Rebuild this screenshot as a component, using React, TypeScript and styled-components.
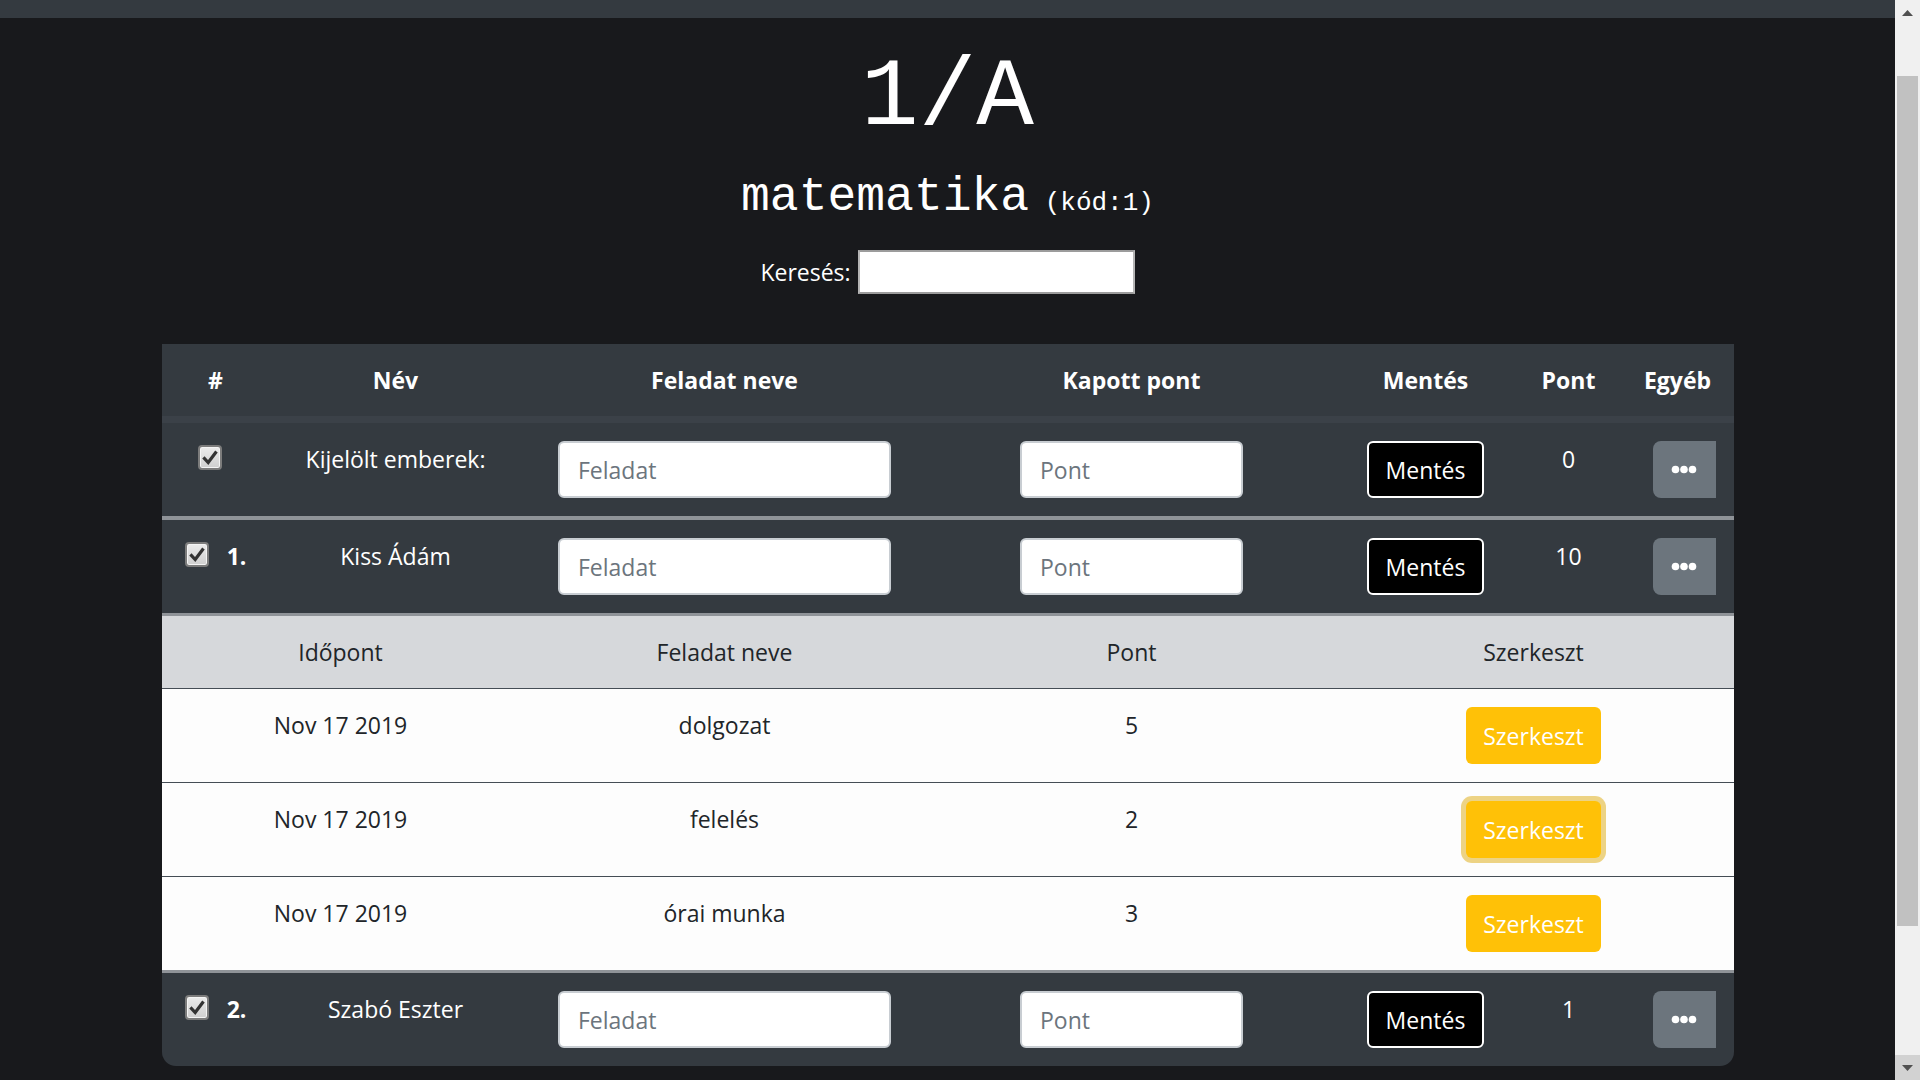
import React, { useLayoutEffect } from "react";
import styled, { createGlobalStyle } from "styled-components";

const SANS = `"Open Sans", "Noto Sans", "Liberation Sans", sans-serif`;
const MONO = `"Liberation Mono", "Courier New", monospace`;

const GlobalStyle = createGlobalStyle`
  html { scrollbar-width: none; }
  html, body { margin: 0; padding: 0; background: #18191c; }
  body { font-family: ${SANS}; font-size: 23px; color: #fff; }
  *, *::before, *::after { box-sizing: border-box; }
  ::-webkit-scrollbar { display: none; }
`;

const Page = styled.div`
  margin-right: 25px;
`;

const Navbar = styled.nav`
  height: 83px;
  background: #343a40;
`;

const Main = styled.main`
  display: flex;
  flex-direction: column;
  align-items: center;
  padding: 23px 0 178px;
`;

const Title = styled.h1`
  margin: 0;
  font-family: ${MONO};
  font-weight: 400;
  font-size: 96px;
  line-height: 115px;
  color: #fff;
`;

const Subtitle = styled.h2`
  margin: 12px 0 0;
  font-family: ${MONO};
  font-weight: 400;
  font-size: 48px;
  line-height: 58px;
  color: #fff;
`;

const Code = styled.small`
  font-size: 26px;
  line-height: 1;
`;

const Search = styled.label`
  margin-top: 24px;
  display: flex;
  align-items: center;
  gap: 7px;
  font-size: 23px;
  line-height: 36px;
  color: #fff;
`;

const SearchInput = styled.input`
  width: 277px;
  height: 44px;
  border: 2px solid #9c9c9c;
  border-left-color: #b5b5b5;
  border-right-color: #b5b5b5;
  background: #fff;
  outline: none;
  font-family: ${SANS};
  font-size: 20px;
`;

const Card = styled.div`
  margin-top: 50px;
  width: 1572px;
  background: #343a40;
  border-radius: 0 0 14px 14px;
  overflow: hidden;
`;

const Table = styled.table`
  width: 100%;
  table-layout: fixed;
  border-collapse: collapse;
  border-spacing: 0;
  color: #fff;
`;

const Col = styled.col<{ $w: number }>`
  width: ${(p) => p.$w}px;
`;

const Th = styled.th`
  padding: 18px;
  font-weight: 700;
  font-size: 23px;
  line-height: 36px;
  text-align: center;
  border-bottom: 7px solid #3b4148;
`;

const Td = styled.td<{ $top?: number; $left?: boolean }>`
  padding: 18px;
  padding-left: ${(p) => (p.$left ? "31px" : "18px")};
  vertical-align: top;
  text-align: ${(p) => (p.$left ? "left" : "center")};
  font-size: 23px;
  line-height: 36px;
  border-top: ${(p) => p.$top ?? 0}px solid #8f9398;
`;

const NestCell = styled.td`
  padding: 0;
  border-top: 3px solid #8f9398;
`;

const CheckBox = styled.span`
  display: inline-flex;
  align-items: center;
  justify-content: center;
  vertical-align: top;
  margin-top: 4px;
  margin-right: 12px;
  width: 24px;
  height: 25px;
  border: 2px solid #7c7c7c;
  border-radius: 4px;
  background: linear-gradient(#ececec, #cfcfcf);
  box-shadow: inset 0 0 0 1px #f4f4f4;
`;

const Num = styled.b`
  font-weight: 700;
  margin-left: 6px;
`;

const FieldInput = styled.input<{ $w: number }>`
  display: block;
  margin: 0 auto;
  width: ${(p) => p.$w}px;
  height: 57px;
  padding: 0 18px;
  border: 2px solid #c8cdd2;
  border-radius: 6px;
  background: #fff;
  font-family: ${SANS};
  font-size: 23px;
  color: #495057;
  outline: none;
  &::placeholder {
    color: #6c757d;
  }
`;

const SaveButton = styled.button`
  width: 117px;
  height: 57px;
  border: 2px solid #fff;
  border-radius: 6px;
  background: #000;
  color: #fff;
  font-family: ${SANS};
  font-size: 23px;
  padding: 0;
  cursor: pointer;
`;

const MoreButton = styled.button`
  display: inline-flex;
  align-items: center;
  justify-content: center;
  width: 63px;
  height: 57px;
  border: none;
  border-radius: 8px 0 0 8px;
  background: #6c757d;
  padding: 0;
  cursor: pointer;
`;

const SubTable = styled.table`
  width: 100%;
  table-layout: fixed;
  border-collapse: collapse;
  color: #212529;
`;

const SubTh = styled.th`
  padding: 18px;
  font-weight: 400;
  font-size: 23px;
  line-height: 36px;
  text-align: center;
  background: #d6d8db;
`;

const SubTd = styled.td`
  padding: 18px;
  vertical-align: top;
  text-align: center;
  font-size: 23px;
  line-height: 36px;
  background: #fdfdfd;
  border-top: 1px solid #454d55;
`;

const EditButton = styled.button<{ $focus?: boolean }>`
  width: 135px;
  height: 57px;
  border: none;
  border-radius: 6px;
  background: #ffc107;
  color: #fff;
  font-family: ${SANS};
  font-size: 23px;
  padding: 0;
  cursor: pointer;
  box-shadow: ${(p) => (p.$focus ? "0 0 0 5px rgba(222, 170, 12, 0.5)" : "none")};
`;

/* window scrollbar, drawn over the right edge of the page */
const ScrollBar = styled.div`
  position: fixed;
  top: 0;
  right: 0;
  width: 25px;
  height: 100vh;
  display: flex;
  flex-direction: column;
  background: #f0f0f0;
`;

const ScrollArrow = styled.div<{ $down?: boolean }>`
  height: 25px;
  flex: none;
  display: flex;
  align-items: center;
  justify-content: center;
  background: ${(p) => (p.$down ? "#d2d2d2" : "#f0f0f0")};
`;

const ScrollThumb = styled.div`
  flex: none;
  margin: 51px 2px 0;
  height: 850px;
  background: #c1c1c1;
`;

const ScrollSpacer = styled.div`
  flex: 1;
`;

const MAIN_COLS = [108, 252, 406, 408, 180, 106, 112];
const SUB_COLS = [358, 410, 404, 400];
const HEADS = ["#", "Név", "Feladat neve", "Kapott pont", "Mentés", "Pont", "Egyéb"];

const Check = () => (
  <CheckBox>
    <svg width="16" height="16" viewBox="0 0 16 16">
      <path d="M2.5 8.5 L6.2 12.5 L13.5 2.8" fill="none" stroke="#333" strokeWidth="3.2" strokeLinecap="square" />
    </svg>
  </CheckBox>
);

const Dots = () => (
  <svg width="26" height="9" viewBox="0 0 26 9">
    <circle cx="4.5" cy="4.5" r="3.8" fill="#fff" />
    <circle cx="13" cy="4.5" r="3.8" fill="#fff" />
    <circle cx="21.5" cy="4.5" r="3.8" fill="#fff" />
  </svg>
);

type RowProps = { top: number; num?: string; name: string; points: string };

const StudentRow = ({ top, num, name, points }: RowProps) => (
  <tr>
    <Td $top={top}>
      <Check />
      {num && <Num>{num}</Num>}
    </Td>
    <Td $top={top}>{name}</Td>
    <Td $top={top}>
      <FieldInput $w={333} placeholder="Feladat" />
    </Td>
    <Td $top={top}>
      <FieldInput $w={223} placeholder="Pont" />
    </Td>
    <Td $top={top}>
      <SaveButton>Mentés</SaveButton>
    </Td>
    <Td $top={top}>{points}</Td>
    <Td $top={top} $left>
      <MoreButton aria-label="Egyéb">
        <Dots />
      </MoreButton>
    </Td>
  </tr>
);

const GRADES = [
  { date: "Nov 17 2019", task: "dolgozat", pts: "5" },
  { date: "Nov 17 2019", task: "felelés", pts: "2", focus: true },
  { date: "Nov 17 2019", task: "órai munka", pts: "3" },
];

export default function App() {
  useLayoutEffect(() => {
    window.scrollTo(0, 65);
  }, []);

  return (
    <Page>
      <GlobalStyle />
      <Navbar />
      <Main>
        <Title>1/A</Title>
        <Subtitle>
          matematika<Code>{" (kód:1)"}</Code>
        </Subtitle>
        <Search>
          Keresés:
          <SearchInput type="text" />
        </Search>
        <Card>
          <Table>
            <colgroup>
              {MAIN_COLS.map((w, i) => (
                <Col key={i} $w={w} />
              ))}
            </colgroup>
            <thead>
              <tr>
                {HEADS.map((h) => (
                  <Th key={h}>{h}</Th>
                ))}
              </tr>
            </thead>
            <tbody>
              <StudentRow top={0} name="Kijelölt emberek:" points="0" />
              <StudentRow top={4} num="1." name="Kiss Ádám" points="10" />
              <tr>
                <NestCell colSpan={7}>
                  <SubTable>
                    <colgroup>
                      {SUB_COLS.map((w, i) => (
                        <Col key={i} $w={w} />
                      ))}
                    </colgroup>
                    <thead>
                      <tr>
                        <SubTh>Időpont</SubTh>
                        <SubTh>Feladat neve</SubTh>
                        <SubTh>Pont</SubTh>
                        <SubTh>Szerkeszt</SubTh>
                      </tr>
                    </thead>
                    <tbody>
                      {GRADES.map((g, i) => (
                        <tr key={i}>
                          <SubTd>{g.date}</SubTd>
                          <SubTd>{g.task}</SubTd>
                          <SubTd>{g.pts}</SubTd>
                          <SubTd>
                            <EditButton $focus={g.focus}>Szerkeszt</EditButton>
                          </SubTd>
                        </tr>
                      ))}
                    </tbody>
                  </SubTable>
                </NestCell>
              </tr>
              <StudentRow top={3} num="2." name="Szabó Eszter" points="1" />
            </tbody>
          </Table>
        </Card>
      </Main>
      <ScrollBar aria-hidden="true">
        <ScrollArrow>
          <svg width="11" height="6" viewBox="0 0 11 6">
            <polygon points="0,6 5.5,0 11,6" fill="#505050" />
          </svg>
        </ScrollArrow>
        <ScrollThumb />
        <ScrollSpacer />
        <ScrollArrow $down>
          <svg width="11" height="6" viewBox="0 0 11 6">
            <polygon points="0,0 5.5,6 11,0" fill="#505050" />
          </svg>
        </ScrollArrow>
      </ScrollBar>
    </Page>
  );
}
